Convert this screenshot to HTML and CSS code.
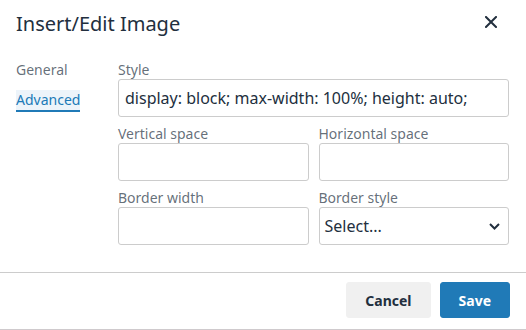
FILE: index.html
```html
<!DOCTYPE html>
<html lang="en">
<head>
<meta charset="utf-8">
<title>Insert/Edit Image</title>
<link rel="stylesheet" href="styles.css">
</head>
<body>
<div class="dialog">
  <div class="dialog-header">
    <div class="dialog-title">Insert/Edit Image</div>
    <button class="close-btn" type="button" aria-label="Close">
      <svg width="12" height="12" viewBox="0 0 12 12"><path d="M1 1 L11 11 M11 1 L1 11" stroke="#222f3e" stroke-width="2" stroke-linecap="square" fill="none"/></svg>
    </button>
  </div>
  <div class="dialog-body">
    <div class="nav">
      <div class="nav-item">General</div>
      <div class="nav-item active">Advanced</div>
    </div>
    <div class="form">
      <div class="field">
        <label class="label">Style</label>
        <input class="input" type="text" value="display: block; max-width: 100%; height: auto;">
      </div>
      <div class="grid">
        <div class="field">
          <label class="label">Vertical space</label>
          <input class="input" type="text">
        </div>
        <div class="field">
          <label class="label">Horizontal space</label>
          <input class="input" type="text">
        </div>
        <div class="field">
          <label class="label">Border width</label>
          <input class="input" type="text">
        </div>
        <div class="field">
          <label class="label">Border style</label>
          <div class="select">
            <span class="select-text">Select...</span>
            <svg class="chev" width="11" height="7" viewBox="0 0 11 7"><path d="M1 1 L5.5 5.5 L10 1" stroke="#222f3e" stroke-width="2" fill="none"/></svg>
          </div>
        </div>
      </div>
    </div>
  </div>
  <div class="dialog-footer">
    <button class="btn btn-secondary" type="button">Cancel</button>
    <button class="btn btn-primary" type="button">Save</button>
  </div>
</div>
</body>
</html>
```
FILE: styles.css
```css
* { box-sizing: border-box; }
html, body { margin: 0; padding: 0; background: #fff; }
body {
  font-family: "Noto Sans", "Open Sans", sans-serif;
  color: #222f3e;
}
.dialog {
  width: 526px;
  height: 330px;
  display: flex;
  flex-direction: column;
  border-bottom: 1px solid #cfcacd;
}
.dialog-header {
  display: flex;
  justify-content: space-between;
  align-items: flex-start;
  padding: 10px 23px 0 16px;
}
.dialog-title {
  font-size: 20px;
  line-height: 28px;
  color: #222f3e;
}
.close-btn {
  width: 24px;
  height: 24px;
  padding: 0;
  border: 0;
  background: transparent;
  display: flex;
  align-items: center;
  justify-content: center;
}
.dialog-body {
  flex: 1;
  display: flex;
  padding: 22px 17px 0 16px;
}
.nav {
  width: 102px;
  flex: none;
  display: flex;
  flex-direction: column;
  align-items: flex-start;
  gap: 10px;
}
.nav-item {
  font-size: 14px;
  line-height: 20px;
  color: rgba(34, 47, 62, 0.7);
}
.nav-item.active {
  color: #207ab7;
  background: #edf4fa;
  border-bottom: 2px solid #207ab7;
  height: 22px;
  padding: 0 0 0 0;
}
.form {
  flex: 1;
  display: flex;
  flex-direction: column;
  gap: 7px;
}
.grid {
  display: grid;
  grid-template-columns: 1fr 1fr;
  column-gap: 10px;
  row-gap: 7px;
}
.field {
  display: flex;
  flex-direction: column;
}
.label {
  font-size: 14px;
  line-height: 19px;
  color: rgba(34, 47, 62, 0.7);
}
.input, .select {
  height: 38px;
  width: 100%;
  border: 1px solid #cccccc;
  border-radius: 3px;
  background: #fff;
  font-family: "Noto Sans", "Open Sans", sans-serif;
  font-size: 16px;
  color: #222f3e;
  padding: 0 6px;
  margin: 0;
  outline: none;
}
.select {
  display: flex;
  align-items: center;
  justify-content: space-between;
  padding: 0 8px 0 5px;
}
.select-text { line-height: 20px; }
.dialog-footer {
  display: flex;
  justify-content: flex-end;
  gap: 9px;
  border-top: 1px solid #cccccc;
  padding: 9px 16px 11px 16px;
}
.btn {
  height: 36px;
  border-radius: 3px;
  font-family: "Noto Sans", "Open Sans", sans-serif;
  font-size: 14px;
  font-weight: 700;
  padding: 0 18px;
  border: 1px solid transparent;
}
.btn-secondary {
  background: #f0f0f0;
  border-color: #f0f0f0;
  color: #222f3e;
}
.btn-primary {
  background: #207ab7;
  border-color: #207ab7;
  color: #fff;
}
```
